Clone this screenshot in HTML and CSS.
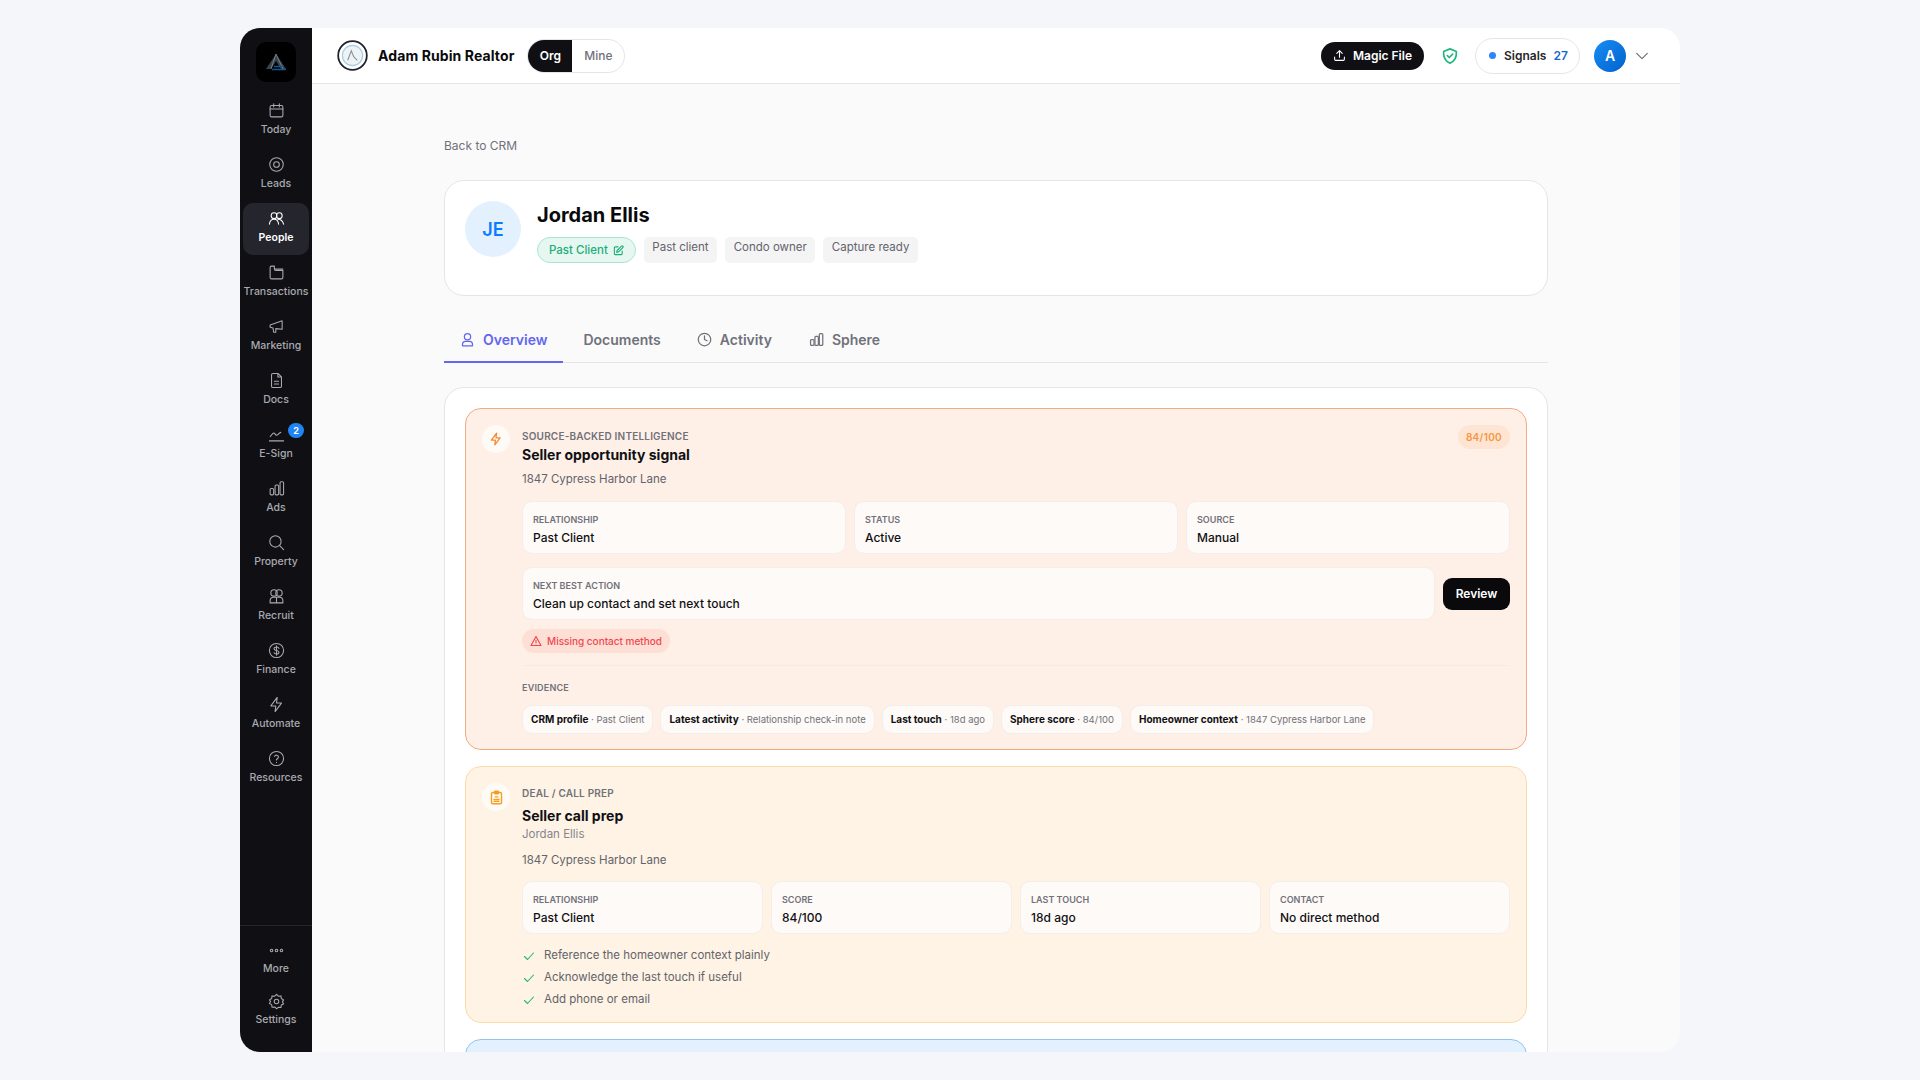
FILE: index.html
```html
<!DOCTYPE html>
<html lang="en">
<head>
<meta charset="UTF-8">
<meta name="viewport" content="width=device-width, initial-scale=1.0">
<link rel="stylesheet" href="styles.css">
<title>Jordan Ellis - CRM</title>
</head>
<body>
<div class="app">
  <nav class="sidebar">
    <div class="logo">
      <svg width="26" height="24" viewBox="0 0 26 24" fill="none"><path d="M13 4 3 19h5l5-8 5 8h5z" fill="#3b444d"/><path d="M13 4 8 19M13 4l7 15" stroke="#8a96a0" stroke-width=".7"/><path d="M9 19.500h14M11 16.500h8" stroke="#13598f" stroke-width="1.300"/></svg>
    </div>
    <div class="nav-list">
      <a class="nav-item"><svg class="ico" viewBox="0 0 24 24"><rect x="3" y="5" width="18" height="16" rx="2"/><path d="M8 2.500V7M16 2.500V7M3 10h18"/></svg>Today</a>
      <a class="nav-item"><svg class="ico" viewBox="0 0 24 24"><circle cx="12" cy="12" r="9.500"/><circle cx="12" cy="12" r="4"/></svg>Leads</a>
      <a class="nav-item active"><svg class="ico" viewBox="0 0 24 24"><circle cx="8.500" cy="8" r="4"/><circle cx="16" cy="8" r="4"/><path d="M2 20c.5-4 3-7 6.500-7s6 3 6.500 7M14 13c4 0 7 3 8 7"/></svg>People</a>
      <a class="nav-item"><svg class="ico" viewBox="0 0 24 24"><path d="M3 19V5a2 2 0 0 1 2-2h4v4a2 2 0 0 0 2 2h10v10a2 2 0 0 1-2 2H5a2 2 0 0 1-2-2zM9 7h12"/></svg>Transactions</a>
      <a class="nav-item"><svg class="ico" viewBox="0 0 24 24"><path d="M3 10l17-6v12l-9-1v5H8l-1-6-4-1z"/></svg>Marketing</a>
      <a class="nav-item"><svg class="ico" viewBox="0 0 24 24"><path d="M5 4a2 2 0 0 1 2-2h7l5 5v13a2 2 0 0 1-2 2H7a2 2 0 0 1-2-2zM14 2v5h5M9 13h6M9 17h6"/></svg>Docs</a>
      <a class="nav-item"><span class="nav-badge">2</span><svg class="ico" viewBox="0 0 24 24"><path d="M3 15c2-1 3-5 5-5s2 3 4 3 3-3 6-4M2 21h20"/></svg>E-Sign</a>
      <a class="nav-item"><svg class="ico" viewBox="0 0 24 24"><rect x="3" y="12" width="5" height="9" rx="1.500"/><rect x="10" y="7" width="5" height="14" rx="1.500"/><rect x="17" y="2.500" width="5" height="18.500" rx="1.500"/></svg>Ads</a>
      <a class="nav-item"><svg class="ico" viewBox="0 0 24 24"><circle cx="10.500" cy="10.500" r="8"/><path d="M16.500 16.500 22 22"/></svg>Property</a>
      <a class="nav-item"><svg class="ico" viewBox="0 0 24 24"><circle cx="8.500" cy="7" r="4.500"/><circle cx="15.500" cy="7" r="4.500"/><path d="M3 21v-3a5 5 0 0 1 5-5h8a5 5 0 0 1 5 5v3zM12 13v8"/></svg>Recruit</a>
      <a class="nav-item"><svg class="ico" viewBox="0 0 24 24"><circle cx="12" cy="12" r="10"/><path d="M15.500 9c-.5-1.300-2-2-3.500-2-2 0-3.500 1-3.500 2.500 0 3.500 7 1.500 7 5 0 1.500-1.500 2.500-3.500 2.500-1.500 0-3-.7-3.500-2M12 5.500v13"/></svg>Finance</a>
      <a class="nav-item"><svg class="ico" viewBox="0 0 24 24"><path d="M13 2 4 14h7l-1 8 9-12h-7z"/></svg>Automate</a>
      <a class="nav-item"><svg class="ico" viewBox="0 0 24 24"><circle cx="12" cy="12" r="10"/><path d="M9.200 9a3 3 0 0 1 5.700 1c0 2-3 2.500-3 4M12 17.500v.1"/></svg>Resources</a>
    </div>
    <div class="nav-bottom">
      <a class="nav-item small"><svg class="ico" viewBox="0 0 24 24"><circle cx="5" cy="12" r="1.800"/><circle cx="12" cy="12" r="1.800"/><circle cx="19" cy="12" r="1.800"/></svg>More</a>
      <a class="nav-item small"><svg class="ico" viewBox="0 0 24 24"><circle cx="12" cy="12" r="3.200"/><path d="M12 1.800l2.600 2.700 3.700-.4.500 3.700 3.200 1.900L20.300 12.500l1.700 2.900-3.200 1.500-.5 3.700-3.700-.4L12 22.200l-2.600-2.500-3.700.4-.5-3.700L2 14.900l1.700-2.900L2 9.700l3.200-1.900.5-3.700 3.700.4z"/></svg>Settings</a>
    </div>
  </nav>

  <div class="workspace">
    <header class="topbar">
      <div class="org-logo">
        <svg width="31" height="31" viewBox="0 0 26 26" fill="none"><circle cx="13" cy="13" r="12" fill="#fff" stroke="#20232b" stroke-width="1.500"/><circle cx="13" cy="13" r="8.500" fill="#eef3f6" stroke="#a9cbe0"/><path d="M9 17l3-8 2 5 3 3" stroke="#8a9098" stroke-width=".9"/></svg>
      </div>
      <span class="org-name">Adam Rubin Realtor</span>
      <div class="scope">
        <span class="scope-btn on">Org</span>
        <span class="scope-btn">Mine</span>
      </div>
      <div class="top-right">
        <button class="magic"><svg width="13" height="13" viewBox="0 0 24 24" fill="none" stroke="#fff" stroke-width="2" stroke-linecap="round" stroke-linejoin="round"><path d="M12 15V3M7 8l5-5 5 5M3 15v4a2 2 0 0 0 2 2h14a2 2 0 0 0 2-2v-4"/></svg>Magic File</button>
        <svg class="shield" width="18" height="18" viewBox="0 0 24 24" fill="none" stroke="#22b77e" stroke-width="2.200" stroke-linecap="round" stroke-linejoin="round"><path d="M12 2.500 20.500 6c.5 7-2 13-8.500 15.500C5.500 19 3 13 3.500 6z"/><path d="M8.500 11.500l2.500 2.500 4.500-4.500"/></svg>
        <div class="signals"><i class="dot"></i>Signals<b>27</b></div>
        <div class="user">A</div>
        <svg width="16" height="16" viewBox="0 0 24 24" fill="none" stroke="#71717a" stroke-width="1.800" stroke-linecap="round" stroke-linejoin="round"><path d="M4 8l8 8 8-8"/></svg>
      </div>
    </header>

    <main class="main">
      <div class="content">
        <a class="back">Back to CRM</a>

        <section class="profile">
          <div class="avatar">JE</div>
          <div>
            <h1>Jordan Ellis</h1>
            <div class="tags">
              <span class="status-pill">Past Client<svg width="11" height="11" viewBox="0 0 24 24" fill="none" stroke="#1dae78" stroke-width="2.400" stroke-linecap="round" stroke-linejoin="round"><path d="M11 4H5a2 2 0 0 0-2 2v13a2 2 0 0 0 2 2h13a2 2 0 0 0 2-2v-6"/><path d="M18.500 2.500a2.100 2.100 0 0 1 3 3L12 15l-4 1 1-4z"/></svg></span>
              <span class="tag">Past client</span>
              <span class="tag">Condo owner</span>
              <span class="tag">Capture ready</span>
            </div>
          </div>
        </section>

        <div class="tabs">
          <a class="tab on"><svg class="tab-ico" viewBox="0 0 24 24"><circle cx="12" cy="7.500" r="5"/><path d="M4 22v-2a5 5 0 0 1 5-5h6a5 5 0 0 1 5 5v2z"/></svg>Overview</a>
          <a class="tab">Documents</a>
          <a class="tab"><svg class="tab-ico" viewBox="0 0 24 24"><circle cx="12" cy="12" r="10"/><path d="M12 6v6l4 2"/></svg>Activity</a>
          <a class="tab"><svg class="tab-ico" viewBox="0 0 24 24"><rect x="2.500" y="12" width="5.500" height="9.500" rx="1.500"/><rect x="9.500" y="7" width="5.500" height="14.500" rx="1.500"/><rect x="16.500" y="2.500" width="5.500" height="19" rx="1.500"/></svg>Sphere</a>
        </div>

        <section class="panel">
          <article class="intel orange">
            <div class="intel-ico"><svg width="14" height="14" viewBox="0 0 24 24" fill="none" stroke="#f58a35" stroke-width="2.200" stroke-linejoin="round" stroke-linecap="round"><path d="M13 2 4 14h7l-1 8 9-12h-7z"/></svg></div>
            <div class="intel-body">
              <div class="intel-top">
                <div>
                  <div class="eyebrow">SOURCE-BACKED INTELLIGENCE</div>
                  <h2>Seller opportunity signal</h2>
                </div>
                <span class="score">84/100</span>
              </div>
              <p class="addr first">1847 Cypress Harbor Lane</p>
              <div class="facts three">
                <div class="fact"><label>RELATIONSHIP</label><strong>Past Client</strong></div>
                <div class="fact"><label>STATUS</label><strong>Active</strong></div>
                <div class="fact"><label>SOURCE</label><strong>Manual</strong></div>
              </div>
              <div class="action-row">
                <div class="fact grow"><label>NEXT BEST ACTION</label><strong>Clean up contact and set next touch</strong></div>
                <button class="review">Review</button>
              </div>
              <span class="warn"><svg width="12" height="12" viewBox="0 0 24 24" fill="none" stroke="#f0484e" stroke-width="2.200" stroke-linecap="round" stroke-linejoin="round"><path d="M12 3 2 21h20zM12 10v5M12 18v.1"/></svg>Missing contact method</span>
              <div class="evidence">
                <div class="eyebrow small">EVIDENCE</div>
                <div class="chips">
                  <span class="chip"><b>CRM profile</b> · Past Client</span>
                  <span class="chip"><b>Latest activity</b> · Relationship check-in note</span>
                  <span class="chip"><b>Last touch</b> · 18d ago</span>
                  <span class="chip"><b>Sphere score</b> · 84/100</span>
                  <span class="chip"><b>Homeowner context</b> · 1847 Cypress Harbor Lane</span>
                </div>
              </div>
            </div>
          </article>

          <article class="intel amber">
            <div class="intel-ico"><svg width="15" height="15" viewBox="0 0 24 24" fill="none" stroke="#f59e1b" stroke-width="2.200" stroke-linecap="round" stroke-linejoin="round"><rect x="4" y="4" width="16" height="18" rx="2"/><rect x="9" y="2" width="6" height="4" rx="1"/><path d="M10 11h4M8 15h1M11 15h5M8 18h8"/></svg></div>
            <div class="intel-body">
              <div class="eyebrow">DEAL / CALL PREP</div>
              <h2 class="tight">Seller call prep</h2>
              <p class="person">Jordan Ellis</p>
              <p class="addr">1847 Cypress Harbor Lane</p>
              <div class="facts four">
                <div class="fact"><label>RELATIONSHIP</label><strong>Past Client</strong></div>
                <div class="fact"><label>SCORE</label><strong>84/100</strong></div>
                <div class="fact"><label>LAST TOUCH</label><strong>18d ago</strong></div>
                <div class="fact"><label>CONTACT</label><strong>No direct method</strong></div>
              </div>
              <ul class="checks">
                <li><svg width="12" height="12" viewBox="0 0 24 24" fill="none" stroke="#22b77e" stroke-width="2.200" stroke-linecap="round" stroke-linejoin="round"><path d="M3 13l6 6L21 6"/></svg>Reference the homeowner context plainly</li>
                <li><svg width="12" height="12" viewBox="0 0 24 24" fill="none" stroke="#22b77e" stroke-width="2.200" stroke-linecap="round" stroke-linejoin="round"><path d="M3 13l6 6L21 6"/></svg>Acknowledge the last touch if useful</li>
                <li><svg width="12" height="12" viewBox="0 0 24 24" fill="none" stroke="#22b77e" stroke-width="2.200" stroke-linecap="round" stroke-linejoin="round"><path d="M3 13l6 6L21 6"/></svg>Add phone or email</li>
              </ul>
            </div>
          </article>

          <article class="intel blue"></article>
        </section>
      </div>
    </main>
  </div>
</div>
</body>
</html>
```

FILE: styles.css
```css
* {
  box-sizing: border-box;
}
html, body {
  height: 100%;
}
body {
  margin: 0;
  background: #f5f6fa;
  font-family: Inter, "Liberation Sans", sans-serif;
  color: #0a0a0c;
  overflow: hidden;
}
h1, h2, p, ul {
  margin: 0;
  padding: 0;
}
.app {
  display: flex;
  width: 1440px;
  height: 1024px;
  margin: 28px 0 0 240px;
  border-radius: 20px;
  overflow: hidden;
}

/* sidebar */
.sidebar {
  width: 72px;
  flex: none;
  background: #101014;
  display: flex;
  flex-direction: column;
  align-items: center;
  padding-top: 14px;
}
.logo {
  width: 40px;
  height: 40px;
  background: #000;
  border-radius: 10px;
  display: flex;
  align-items: center;
  justify-content: center;
  margin-bottom: 13px;
}
.nav-list {
  display: flex;
  flex-direction: column;
  gap: 2px;
  flex: 1;
}
.nav-item {
  position: relative;
  width: 66px;
  height: 52px;
  border-radius: 10px;
  display: flex;
  flex-direction: column;
  align-items: center;
  justify-content: center;
  gap: 4px;
  padding-bottom: 3px;
  font-size: 10.500px;
  font-weight: 500;
  line-height: 14px;
  color: #a9a9b0;
  white-space: nowrap;
}
.nav-item.active {
  background: #25262d;
  color: #fff;
  font-weight: 600;
}
.ico {
  width: 17px;
  height: 17px;
  fill: none;
  stroke: currentColor;
  stroke-width: 1.500;
  stroke-linecap: round;
  stroke-linejoin: round;
}
.nav-badge {
  position: absolute;
  top: 4px;
  right: 5px;
  width: 16px;
  height: 15px;
  border-radius: 8px;
  background: #1f85f5;
  color: #fff;
  font-size: 9px;
  font-weight: 700;
  line-height: 15px;
  text-align: center;
}
.nav-bottom {
  width: 100%;
  border-top: 1px solid #25262b;
  display: flex;
  flex-direction: column;
  align-items: center;
  padding: 7px 0 17px;
}
.nav-item.small {
  height: 51px;
  gap: 3px;
  padding-bottom: 0;
}

/* top bar */
.workspace {
  flex: 1;
  min-width: 0;
  display: flex;
  flex-direction: column;
  background: #fafafa;
}
.topbar {
  height: 56px;
  flex: none;
  background: #fff;
  border-bottom: 1px solid #e5e5e8;
  display: flex;
  align-items: center;
  padding: 0 30px 0 24px;
}
.org-logo {
  width: 32px;
  height: 32px;
  display: flex;
  align-items: center;
  justify-content: center;
  margin-right: 10px;
}
.org-name {
  font-size: 14px;
  font-weight: 700;
  letter-spacing: .1px;
  margin-right: 13px;
}
.scope {
  display: flex;
  height: 34px;
  border: 1px solid #e5e5e8;
  border-radius: 17px;
  overflow: hidden;
}
.scope-btn {
  width: 52px;
  display: flex;
  align-items: center;
  justify-content: center;
  font-size: 12px;
  font-weight: 500;
  color: #71717a;
}
.scope-btn.on {
  width: 44px;
  background: #101014;
  color: #fff;
  font-weight: 600;
}
.top-right {
  margin-left: auto;
  display: flex;
  align-items: center;
}
.magic {
  height: 28px;
  border: none;
  border-radius: 14px;
  background: #101014;
  color: #fff;
  font: 600 12px Inter, sans-serif;
  display: flex;
  align-items: center;
  gap: 7px;
  padding: 0 12px;
  margin-right: 17px;
}
.shield {
  margin-right: 16px;
}
.signals {
  height: 36px;
  width: 105px;
  border: 1px solid #e5e5e8;
  border-radius: 18px;
  display: flex;
  align-items: center;
  padding-left: 13px;
  font-size: 12px;
  font-weight: 600;
  color: #27272a;
  margin-right: 14px;
}
.signals .dot {
  width: 7px;
  height: 7px;
  border-radius: 50%;
  background: #2f86f6;
  margin-right: 8px;
}
.signals b {
  color: #1668c7;
  font-weight: 600;
  margin-left: 7px;
}
.user {
  width: 32px;
  height: 32px;
  border-radius: 50%;
  background: linear-gradient(135deg, #1a8cf5, #0062cc);
  color: #fff;
  font-size: 14px;
  font-weight: 600;
  display: flex;
  align-items: center;
  justify-content: center;
  margin-right: 8px;
}

/* content */
.main {
  flex: 1;
  overflow: hidden;
}
.content {
  width: 1104px;
  margin: 0 auto;
  padding-top: 54px;
}
.back {
  display: block;
  font-size: 12px;
  line-height: 16px;
  color: #71717a;
  margin-bottom: 26px;
}
.profile {
  height: 116px;
  background: #fff;
  border: 1px solid #e5e5e8;
  border-radius: 20px;
  padding: 20px;
  display: flex;
  gap: 16px;
}
.avatar {
  width: 56px;
  height: 56px;
  border-radius: 50%;
  background: #e3f1ff;
  color: #0a7cff;
  font-size: 18px;
  font-weight: 600;
  display: flex;
  align-items: center;
  justify-content: center;
}
h1 {
  font-size: 20px;
  font-weight: 700;
  line-height: 28px;
}
.tags {
  display: flex;
  align-items: flex-start;
  gap: 8px;
  margin-top: 8px;
}
.status-pill {
  height: 26px;
  border: 1px solid #a8e6cd;
  background: #e5f7f0;
  color: #1dae78;
  border-radius: 13px;
  display: flex;
  align-items: center;
  gap: 5px;
  font-size: 11.500px;
  font-weight: 500;
  padding: 0 11px;
}
.tag {
  height: 26px;
  background: #f4f4f5;
  color: #63636b;
  border-radius: 5px;
  font-size: 11.500px;
  line-height: 20px;
  padding: 0 8.500px;
}
.tabs {
  display: flex;
  height: 67px;
  align-items: flex-end;
  border-bottom: 1px solid #e5e5e8;
  margin-bottom: 24px;
}
.tab {
  height: 44px;
  display: flex;
  align-items: center;
  gap: 8px;
  padding: 0 16px 2px;
  margin-bottom: -1px;
  font-size: 14px;
  font-weight: 600;
  color: #71717a;
  border-bottom: 2px solid transparent;
}
.tab + .tab {
  margin-left: 4px;
}
.tab:last-child {
  margin-left: 5px;
}
.tab.on {
  color: #6366f1;
  border-bottom-color: #6366f1;
}
.tab-ico {
  width: 15px;
  height: 15px;
  fill: none;
  stroke: currentColor;
  stroke-width: 2;
  stroke-linecap: round;
  stroke-linejoin: round;
}
.panel {
  background: #fff;
  border: 1px solid #e5e5e8;
  border-radius: 20px;
  padding: 20px;
  height: 800px;
  display: flex;
  flex-direction: column;
  gap: 16px;
}
.intel {
  border: 1px solid;
  border-radius: 16px;
  padding: 16px;
  display: flex;
  gap: 12px;
}
.orange {
  background: #fef0e7;
  border-color: #efab88;
  height: 342px;
}
.amber {
  background: #fef3e4;
  border-color: #fbdca9;
  height: 257px;
}
.blue {
  background: #e3f1fe;
  border-color: #90c4ea;
  height: 120px;
}
.intel-ico {
  width: 28px;
  height: 28px;
  flex: none;
  border-radius: 50%;
  background: #fefaf6;
  display: flex;
  align-items: center;
  justify-content: center;
}
.intel-body {
  flex: 1;
  min-width: 0;
  padding-top: 3px;
}
.intel-top {
  display: flex;
  justify-content: space-between;
  align-items: flex-start;
  margin-top: -3px;
}
.intel-top > div {
  padding-top: 4px;
}
.eyebrow {
  font-size: 10px;
  font-weight: 600;
  line-height: 14px;
  letter-spacing: .2px;
  color: #71717a;
}
.eyebrow.small {
  font-size: 9px;
}
h2 {
  font-size: 14px;
  font-weight: 700;
  line-height: 20px;
  color: #101014;
  margin-top: 2px;
}
h2.tight {
  margin-top: 6px;
}
.score {
  height: 24px;
  border-radius: 12px;
  background: #fee4d2;
  color: #f7963f;
  font-size: 10px;
  font-weight: 600;
  line-height: 25px;
  letter-spacing: .3px;
  padding: 0 8px;
}
.addr {
  font-size: 11.500px;
  line-height: 16px;
  color: #63636b;
}
.addr.first {
  margin-top: 6px;
}
.person {
  font-size: 11.500px;
  line-height: 16px;
  color: #85858c;
  margin-bottom: 10px;
}
.facts {
  display: grid;
  gap: 8px;
  margin-top: 14px;
}
.person + .addr + .facts {
  margin-top: 13px;
}
.facts.three {
  grid-template-columns: repeat(3, 1fr);
}
.facts.four {
  grid-template-columns: repeat(4, 1fr);
}
.fact {
  height: 53px;
  background: #fefaf7;
  border: 1px solid #f3eee9;
  border-radius: 10px;
  padding: 12px 10px 0;
}
.fact label {
  display: block;
  font-size: 9px;
  font-weight: 600;
  line-height: 12px;
  color: #71717a;
  margin-bottom: 3px;
}
.fact strong {
  display: block;
  font-size: 12px;
  font-weight: 550;
  line-height: 18px;
  color: #101014;
}
.action-row {
  display: flex;
  align-items: center;
  gap: 8px;
  margin-top: 13px;
}
.grow {
  flex: 1;
}
.review {
  width: 67px;
  height: 32px;
  border: none;
  border-radius: 9px;
  background: #0a0a0c;
  color: #fff;
  font: 600 12px Inter, sans-serif;
}
.warn {
  display: inline-flex;
  align-items: center;
  gap: 5px;
  height: 24px;
  border-radius: 12px;
  background: #fddfd6;
  color: #f0484e;
  font-size: 10px;
  font-weight: 500;
  padding: 0 8px;
  margin-top: 9px;
  vertical-align: top;
}
.evidence {
  border-top: 1px solid #f5ebe4;
  margin-top: 12px;
  padding-top: 15px;
}
.chips {
  display: flex;
  gap: 7px;
  margin-top: 10px;
}
.chip {
  height: 29px;
  background: #fefaf7;
  border: 1px solid #f3eee9;
  border-radius: 10px;
  font-size: 9.500px;
  line-height: 27px;
  padding: 0 8px;
  color: #71717a;
  white-space: nowrap;
}
.chip b {
  font-size: 10px;
  font-weight: 700;
  color: #101014;
}
.checks {
  list-style: none;
  margin-top: 10px;
}
.checks li {
  display: flex;
  align-items: center;
  gap: 9px;
  font-size: 11.500px;
  line-height: 22px;
  color: #63636b;
}
.checks svg {
  margin-left: 1px;
  margin-top: 2px;
}
```
